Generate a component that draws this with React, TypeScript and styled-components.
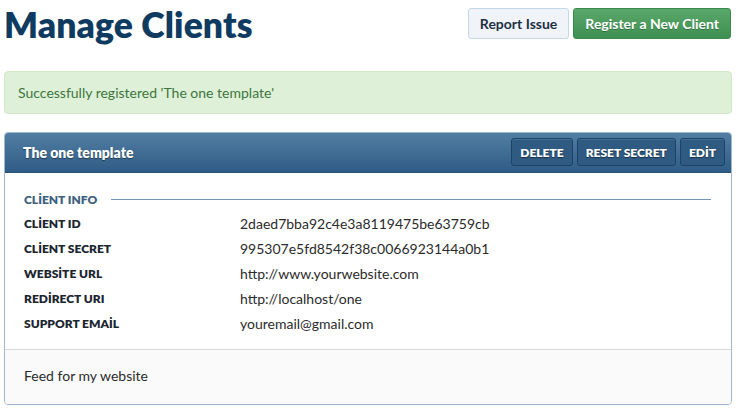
import React from "react";
import styled, { createGlobalStyle } from "styled-components";

const Global = createGlobalStyle`
  html, body { margin: 0; padding: 0; background: #fff; }
  body { font-family: "Lato", "Open Sans", sans-serif; color: #333; }
  * { box-sizing: border-box; }
`;

const Page = styled.div`
  width: 728px;
  margin-left: 4px;
  display: flex;
  flex-direction: column;
`;

const TopBar = styled.div`
  display: flex;
  justify-content: space-between;
  align-items: flex-start;
  height: 71px;
`;

const Title = styled.h1`
  margin: 0;
  padding-top: 3px;
  font-size: 35.5px;
  line-height: 44px;
  font-weight: 800;
  color: #0f3b61;
  letter-spacing: 0.1px;
`;

const Actions = styled.div`
  display: flex;
  gap: 4px;
  padding-top: 8px;
  margin-right: 1px;
`;

const Button = styled.button<{ $primary?: boolean }>`
  height: 31px;
  padding: 0 11px;
  border-radius: 3px;
  font-family: inherit;
  font-size: 14px;
  font-weight: 700;
  cursor: pointer;
  ${(p) =>
    p.$primary
      ? `
    background: linear-gradient(#5aa86a, #3f8f52);
    border: 1px solid #3a8a4c;
    color: #fff;
    text-shadow: 0 1px 0 rgba(0,0,0,0.25);
  `
      : `
    background: #f0f4f8;
    border: 1px solid #c5d8ea;
    color: #1e2f45;
  `}
`;

const Alert = styled.div`
  height: 43px;
  display: flex;
  align-items: center;
  padding-left: 13px;
  background: #dff0d8;
  border: 1px solid #d0e9c6;
  border-radius: 4px;
  color: #3c763d;
  font-size: 14px;
  margin-bottom: 18px;
`;

const Panel = styled.div`
  border: 1px solid #9fb7cf;
  border-radius: 4px;
  overflow: hidden;
`;

const PanelHeader = styled.div`
  height: 41px;
  display: flex;
  align-items: center;
  justify-content: space-between;
  padding: 0 7px 0 19px;
  background: linear-gradient(#537fa4, #2f5c85);
  border-bottom: 1px solid #2a5279;
  margin: -1px -1px 0 -1px;
  border-radius: 4px 4px 0 0;
`;

const PanelTitle = styled.h2`
  margin: 0;
  font-size: 14px;
  font-weight: 800;
  color: #fff;
  text-shadow: 0 1px 1px rgba(0, 0, 0, 0.45);
`;

const HeaderActions = styled.div`
  display: flex;
  gap: 4px;
`;

const HeaderButton = styled.button`
  height: 28px;
  padding: 0 8px;
  border-radius: 3px;
  background: #2f5a82;
  border: 1px solid #1d4267;
  box-shadow: inset 0 1px 0 rgba(255, 255, 255, 0.12);
  color: #fff;
  font-family: inherit;
  font-size: 12px;
  font-weight: 800;
  text-shadow: 0 1px 1px rgba(0, 0, 0, 0.5);
  cursor: pointer;
`;

const PanelBody = styled.div`
  padding: 14px 20px 13px 19px;
  background: #fff;
`;

const SectionHead = styled.div`
  display: flex;
  align-items: center;
  gap: 14px;
  height: 24px;
  color: #3e5f80;
  font-size: 12px;
  font-weight: 800;
`;

const Rule = styled.div`
  flex: 1;
  height: 1px;
  background: #7497b8;
`;

const Rows = styled.dl`
  margin: 0;
  display: grid;
  grid-template-columns: 216px 1fr;
  grid-auto-rows: 25px;
  align-items: center;
`;

const Label = styled.dt`
  font-size: 12px;
  font-weight: 800;
  color: #1b2530;
`;

const Value = styled.dd`
  margin: 0;
  font-size: 14px;
  color: #2b2b2b;
`;

const PanelFooter = styled.div`
  height: 55px;
  display: flex;
  align-items: center;
  padding: 0 0 3px 19px;
  background: #fafafa;
  border-top: 1px solid #d9d9d9;
  font-size: 14px;
  color: #2b2b2b;
`;

const rows: [string, string][] = [
  ["CLİENT ID", "2daed7bba92c4e3a8119475be63759cb"],
  ["CLİENT SECRET", "995307e5fd8542f38c0066923144a0b1"],
  ["WEBSİTE URL", "http://www.yourwebsite.com"],
  ["REDİRECT URI", "http://localhost/one"],
  ["SUPPORT EMAİL", "youremail@gmail.com"],
];

export default function App() {
  return (
    <>
      <Global />
      <Page>
        <TopBar>
          <Title>Manage Clients</Title>
          <Actions>
            <Button>Report Issue</Button>
            <Button $primary>Register a New Client</Button>
          </Actions>
        </TopBar>
        <Alert>Successfully registered 'The one template'</Alert>
        <Panel>
          <PanelHeader>
            <PanelTitle>The one template</PanelTitle>
            <HeaderActions>
              <HeaderButton>DELETE</HeaderButton>
              <HeaderButton>RESET SECRET</HeaderButton>
              <HeaderButton>EDİT</HeaderButton>
            </HeaderActions>
          </PanelHeader>
          <PanelBody>
            <SectionHead>
              CLİENT INFO
              <Rule />
            </SectionHead>
            <Rows>
              {rows.map(([k, v]) => (
                <React.Fragment key={k}>
                  <Label>{k}</Label>
                  <Value>{v}</Value>
                </React.Fragment>
              ))}
            </Rows>
          </PanelBody>
          <PanelFooter>Feed for my website</PanelFooter>
        </Panel>
      </Page>
    </>
  );
}
